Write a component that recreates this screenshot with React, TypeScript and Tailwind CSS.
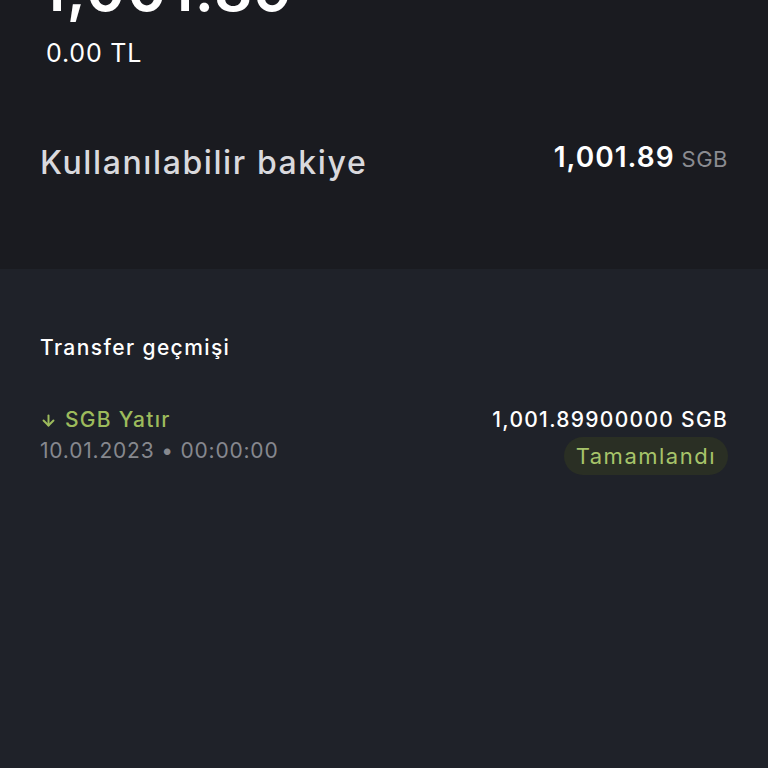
import { ArrowDown } from "lucide-react";

function App() {
  return (
    <div
      className="w-full h-screen overflow-hidden flex flex-col bg-[#1f2229]"
      style={{ fontFamily: "Inter, 'Noto Sans', sans-serif" }}
    >
      <section className="bg-[#1a1b20] h-[269px] shrink-0 px-10 flex flex-col">
        <div className="-mt-[41px] text-[60px] leading-[60px] font-semibold text-white tracking-[1.5px]">
          1,001.89
        </div>
        <div className="mt-[19px] pl-[6px] text-[25px] leading-[30px] text-white tracking-[0.8px]">
          0.00 TL
        </div>
        <div className="mt-[75px] flex items-start justify-between">
          <span className="text-[32px] leading-[40px] font-medium text-[#d9d9dd] tracking-[1.6px]">
            Kullanılabilir bakiye
          </span>
          <span className="-mt-[6px] flex items-baseline gap-[7px] leading-[40px]">
            <span className="text-[28px] font-semibold text-white tracking-[1px]">1,001.89</span>
            <span className="text-[22px] text-[#8b8c91] tracking-[0.5px]">SGB</span>
          </span>
        </div>
      </section>

      <section className="px-10 pt-[65px]">
        <h2 className="text-[21px] leading-[28px] font-medium text-white tracking-[1.4px]">
          Transfer geçmişi
        </h2>
        <div className="mt-[43px] flex justify-between items-start">
          <div className="flex flex-col">
            <span className="flex items-center gap-[8px] text-[21px] leading-[30px] font-medium text-[#9dbb5c] tracking-[1.3px]">
              <ArrowDown size={17} strokeWidth={2.8} />
              SGB Yatır
            </span>
            <span className="text-[21px] leading-[32px] text-[#86888e] tracking-[0.8px]">
              10.01.2023 • 00:00:00
            </span>
          </div>
          <div className="flex flex-col items-end gap-[2px]">
            <span className="text-[21px] leading-[30px] font-medium text-white tracking-[1.3px]">
              1,001.89900000 SGB
            </span>
            <span className="rounded-full bg-[#2a2f24] px-3 h-[38px] flex items-center text-[22px] text-[#a7c46a] tracking-[1.5px]">
              Tamamlandı
            </span>
          </div>
        </div>
      </section>
    </div>
  );
}

export default App;
